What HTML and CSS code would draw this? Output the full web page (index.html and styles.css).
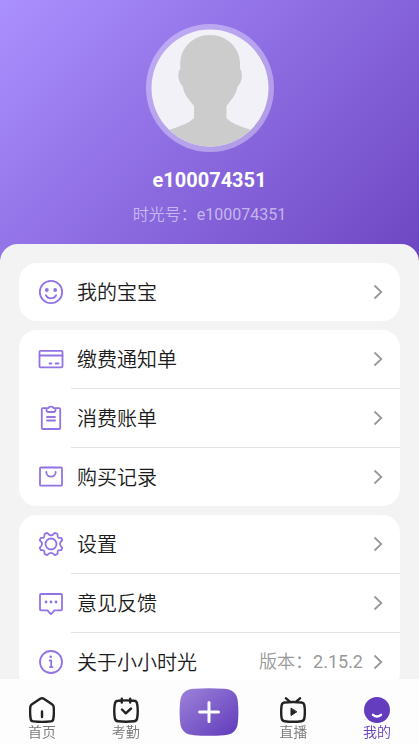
FILE: index.html
```html
<!DOCTYPE html>
<html lang="zh-CN">
<head>
<meta charset="utf-8">
<meta name="viewport" content="width=device-width, initial-scale=1">
<title>我的</title>
<link rel="stylesheet" href="styles.css">
</head>
<body>
<svg class="sprite" aria-hidden="true">
  <symbol id="chevron" viewBox="0 0 10 16"><path d="M1.5 1.5 8.3 8 1.5 14.5"/></symbol>
</svg>

<header class="profile">
  <svg class="avatar" viewBox="0 0 128 128" role="img" aria-label="头像">
    <defs><clipPath id="face"><circle cx="64" cy="64" r="58.5"/></clipPath></defs>
    <circle class="avatar-ring" cx="64" cy="64" r="64"/>
    <circle class="avatar-bg" cx="64" cy="64" r="58.5"/>
    <path class="avatar-body" clip-path="url(#face)" d="M64 11C47 11 34.300 24 34.300 39.500V45C32 46.500 32 53 33 56C34 59.500 35.500 61 37 63C37.700 70 42.500 75 48 82V94C43.500 99 34 102 23 106V128H105V106C94 102 84.500 99 80.500 94V82C86 75 90.500 70 91.300 63C93 61 94.500 59.500 95.300 56C96.200 53 96.200 46.500 94 45V39.500C94 24 81 11 64 11Z"/>
  </svg>
  <h1 class="name">e100074351</h1>
  <p class="account">时光号：<span class="digits">e100074351</span></p>
</header>

<main class="sheet">
  <nav class="card" aria-label="宝宝">
    <a class="row" href="#baby">
      <svg class="icon" viewBox="0 0 26 26"><circle cx="13" cy="13" r="11.200"/><circle class="dot" cx="8.800" cy="11" r="1.900"/><circle class="dot" cx="17.200" cy="11" r="1.900"/><path d="M7.800 16.200C10 20.300 16 20.300 18.200 16.200"/></svg>
      <span class="label">我的宝宝</span>
      <svg class="chevron"><use href="#chevron"/></svg>
    </a>
  </nav>

  <nav class="card" aria-label="账单">
    <a class="row" href="#notice">
      <svg class="icon" viewBox="0 0 26 26"><rect x="1.500" y="4.800" width="23" height="16.500" rx="1"/><path d="M1.500 9.500H24.500M11.500 17.500H13.500M17.500 17.500H20.500"/></svg>
      <span class="label">缴费通知单</span>
      <svg class="chevron"><use href="#chevron"/></svg>
    </a>
    <a class="row" href="#bills">
      <svg class="icon" viewBox="0 0 26 26"><path d="M8.500 3.200H4.800Q3.800 3.200 3.800 4.200V23Q3.800 24 4.800 24H21.200Q22.200 24 22.200 23V4.200Q22.200 3.200 21.200 3.200H17.500M8.500 5V3.200H10.300C11 1.200 15 1.200 15.700 3.200H17.500V5Q17.500 7 15.500 7H10.500Q8.500 7 8.500 5ZM9 12H17M9 15.500H17"/></svg>
      <span class="label">消费账单</span>
      <svg class="chevron"><use href="#chevron"/></svg>
    </a>
    <a class="row" href="#orders">
      <svg class="icon" viewBox="0 0 26 26"><rect x="2" y="3.500" width="22" height="18.200" rx="1"/><path d="M8.300 8C8.300 14.200 17.700 14.200 17.700 8"/></svg>
      <span class="label">购买记录</span>
      <svg class="chevron"><use href="#chevron"/></svg>
    </a>
  </nav>

  <nav class="card" aria-label="应用">
    <a class="row" href="#settings">
      <svg class="icon" viewBox="0 0 26 26"><circle cx="13" cy="13" r="5.500"/><path d="M9.100 1.900Q11.200 4.300 13 4.300T16.900 1.900L19.500 3Q19.500 6 20.200 6.500Q21 7.200 23.300 6.800L24.300 9.300Q22 11.300 22 13T24.300 16.700L23.300 19.200Q21 18.800 20.200 19.500Q19.500 20.200 19.500 23L16.900 24.100Q15 21.800 13 21.800T9.100 24.100L6.500 23Q6.600 20.300 5.800 19.500Q5 18.800 2.700 19.200L1.700 16.700Q4 14.700 4 13T1.700 9.300L2.700 6.800Q5 7.200 5.800 6.500Q6.600 5.800 6.500 3Z"/></svg>
      <span class="label">设置</span>
      <svg class="chevron"><use href="#chevron"/></svg>
    </a>
    <a class="row" href="#feedback">
      <svg class="icon" viewBox="0 0 26 26"><path d="M3 4H23Q24 4 24 5V19.300Q24 20.300 23 20.300H16.500L13.600 23.700Q13 24.300 12.400 23.700L9.500 20.300H3Q2 20.300 2 19.300V5Q2 4 3 4Z"/><circle class="dot" cx="8" cy="12" r="1.400"/><circle class="dot" cx="13" cy="12" r="1.400"/><circle class="dot" cx="18" cy="12" r="1.400"/></svg>
      <span class="label">意见反馈</span>
      <svg class="chevron"><use href="#chevron"/></svg>
    </a>
    <a class="row" href="#about">
      <svg class="icon" viewBox="0 0 26 26"><circle cx="13" cy="13" r="11"/><circle class="dot" cx="12.700" cy="7.800" r="1.300"/><path d="M11.700 11.500H13.200V18.200M12 18.200H14.500"/></svg>
      <span class="label">关于小小时光</span>
      <span class="version">版本：<span class="digits">2.15.2</span></span>
      <svg class="chevron"><use href="#chevron"/></svg>
    </a>
  </nav>
</main>

<nav class="tabs" aria-label="主导航">
  <a class="tab" href="#home">
    <svg class="tab-icon" viewBox="0 0 26 26"><path d="M11.200 1.800 3 7.200Q1.500 8.200 1.300 10Q.7 16 1.700 22Q2 24.200 4.200 24.400Q13 25.400 21.800 24.400Q24 24.200 24.300 22Q25.300 16 24.700 10Q24.500 8.200 23 7.200L14.800 1.800Q13 .8 11.200 1.800ZM13 14.500V20"/></svg>
    <span>首页</span>
  </a>
  <a class="tab" href="#attendance">
    <svg class="tab-icon" viewBox="0 0 26 26"><path d="M5 3.800Q2.200 4 1.800 7Q.7 14 1.800 21Q2.200 24 5 24.300Q13 25.300 21 24.300Q23.800 24 24.200 21Q25.300 14 24.200 7Q23.800 4 21 3.800Q13 3 5 3.800ZM8.800 1.800V5.500M17.200 1.800V5.500M9 12.500 12.800 16.300 18 11.500"/></svg>
    <span>考勤</span>
  </a>
  <button class="add" type="button" aria-label="发布">
    <svg class="add-icon" viewBox="0 0 60 48">
      <defs><linearGradient id="violet" x1="0" y1="0" x2="1" y2="1"><stop offset="0" stop-color="#9d83da"/><stop offset="1" stop-color="#603aba"/></linearGradient></defs>
      <path fill="url(#violet)" d="M15 .8Q30-.4 45 .8Q57.500 1.500 58.800 13Q60 24 58.800 35Q57.500 46.500 45 47.200Q30 48.400 15 47.200Q2.500 46.500 1.200 35Q0 24 1.200 13Q2.500 1.500 15 .8Z"/>
      <path class="plus" d="M30 14.500V33.500M20.500 24H39.500"/>
    </svg>
  </button>
  <a class="tab" href="#live">
    <svg class="tab-icon" viewBox="0 0 26 26"><path d="M4.500 5.500Q2 5.800 1.600 8.500Q.7 15 1.600 21Q2 23.800 4.500 24.200Q13 25.400 21.500 24.200Q24 23.800 24.400 21Q25.300 15 24.400 8.500Q24 5.800 21.500 5.500Q13 4.600 4.500 5.500ZM6 1.300 9.500 4.300M20 1.300 16.500 4.300"/><path class="play" d="M11 11.500V18.500L16.500 15Z"/></svg>
    <span>直播</span>
  </a>
  <a class="tab tab-active" href="#me" aria-current="page">
    <svg class="tab-icon" viewBox="0 0 26 26"><circle class="me" cx="13" cy="13" r="13"/><path class="smile" d="M9 17.800Q13 21.300 17 17.800"/></svg>
    <span>我的</span>
  </a>
</nav>
</body>
</html>
```
FILE: styles.css
```css
* {
  box-sizing: border-box;
}

body {
  margin: 0;
  min-height: 100vh;
  display: flex;
  flex-direction: column;
  background: #f3f3f3;
  color: #1c1c1c;
  font-family: Roboto, "Noto Sans CJK SC", sans-serif;
}

a {
  color: inherit;
  text-decoration: none;
}

.sprite {
  display: none;
}

.profile {
  display: flex;
  flex-direction: column;
  align-items: center;
  padding: 24px 16px 33px;
  background: linear-gradient(135deg, #ab90ff, #6d46c2);
  color: #fff;
}

.avatar {
  width: 128px;
  height: 128px;
}

.avatar-ring {
  fill: #fff;
  fill-opacity: 0.36;
}

.avatar-bg {
  fill: #f2f1f7;
}

.avatar-body {
  fill: #ccc;
}

.name {
  margin: 14px 0 0;
  font-size: 20px;
  line-height: 28px;
  font-weight: 700;
}

.account {
  margin: 9px 0 0;
  font-size: 16px;
  line-height: 24px;
  font-weight: 350;
  color: rgba(255, 255, 255, 0.55);
}

.digits {
  font-weight: 400;
}

.sheet {
  flex: 1;
  display: flex;
  flex-direction: column;
  gap: 9px;
  margin-top: -16px;
  padding: 19px 19px 48px;
  border-radius: 18px 18px 0 0;
  background: #f3f3f3;
}

.card {
  border-radius: 18px;
  background: #fff;
  overflow: hidden;
}

.row {
  display: flex;
  align-items: center;
  height: 58px;
  padding: 0 17px 0 19px;
}

.row + .row {
  height: 59px;
  background: linear-gradient(#e2e2e2, #e2e2e2) 52px 0 / 100% 1px no-repeat;
}

.icon {
  width: 26px;
  height: 26px;
  margin-right: 13px;
  fill: none;
  stroke: #9273e6;
  stroke-width: 1.8;
  stroke-linecap: round;
  stroke-linejoin: round;
}

.dot {
  fill: #9273e6;
  stroke: none;
}

.label {
  flex: 1;
  padding-top: 2px;
  font-size: 20px;
  line-height: 28px;
  font-weight: 350;
}

.version {
  margin-right: 10px;
  font-size: 18px;
  line-height: 28px;
  font-weight: 350;
  color: #999;
}

.chevron {
  width: 10px;
  height: 16px;
  fill: none;
  stroke: #999;
  stroke-width: 1.8;
}

.tabs {
  position: fixed;
  inset: auto 0 0;
  display: grid;
  grid-template-columns: repeat(5, 1fr);
  align-items: center;
  height: 66px;
  background: rgba(253, 253, 253, 0.98);
}

.tab {
  display: flex;
  flex-direction: column;
  align-items: center;
  padding-top: 14px;
  font-size: 14px;
  line-height: 18px;
  font-weight: 350;
  color: #777;
}

.tab-active {
  color: #643cbe;
}

.tab-icon {
  width: 26px;
  height: 26px;
  fill: none;
  stroke: #222;
  stroke-width: 2.4;
  stroke-linecap: round;
  stroke-linejoin: round;
}

.play {
  fill: #222;
  stroke-width: 1;
}

.me {
  fill: #643cbe;
  stroke: none;
}

.smile {
  stroke: #fff;
}

.add {
  display: flex;
  justify-content: center;
  padding: 0;
  border: 0;
  background: none;
}

.add-icon {
  width: 60px;
  height: 48px;
}

.plus {
  fill: none;
  stroke: #fff;
  stroke-width: 3;
  stroke-linecap: round;
}
```
